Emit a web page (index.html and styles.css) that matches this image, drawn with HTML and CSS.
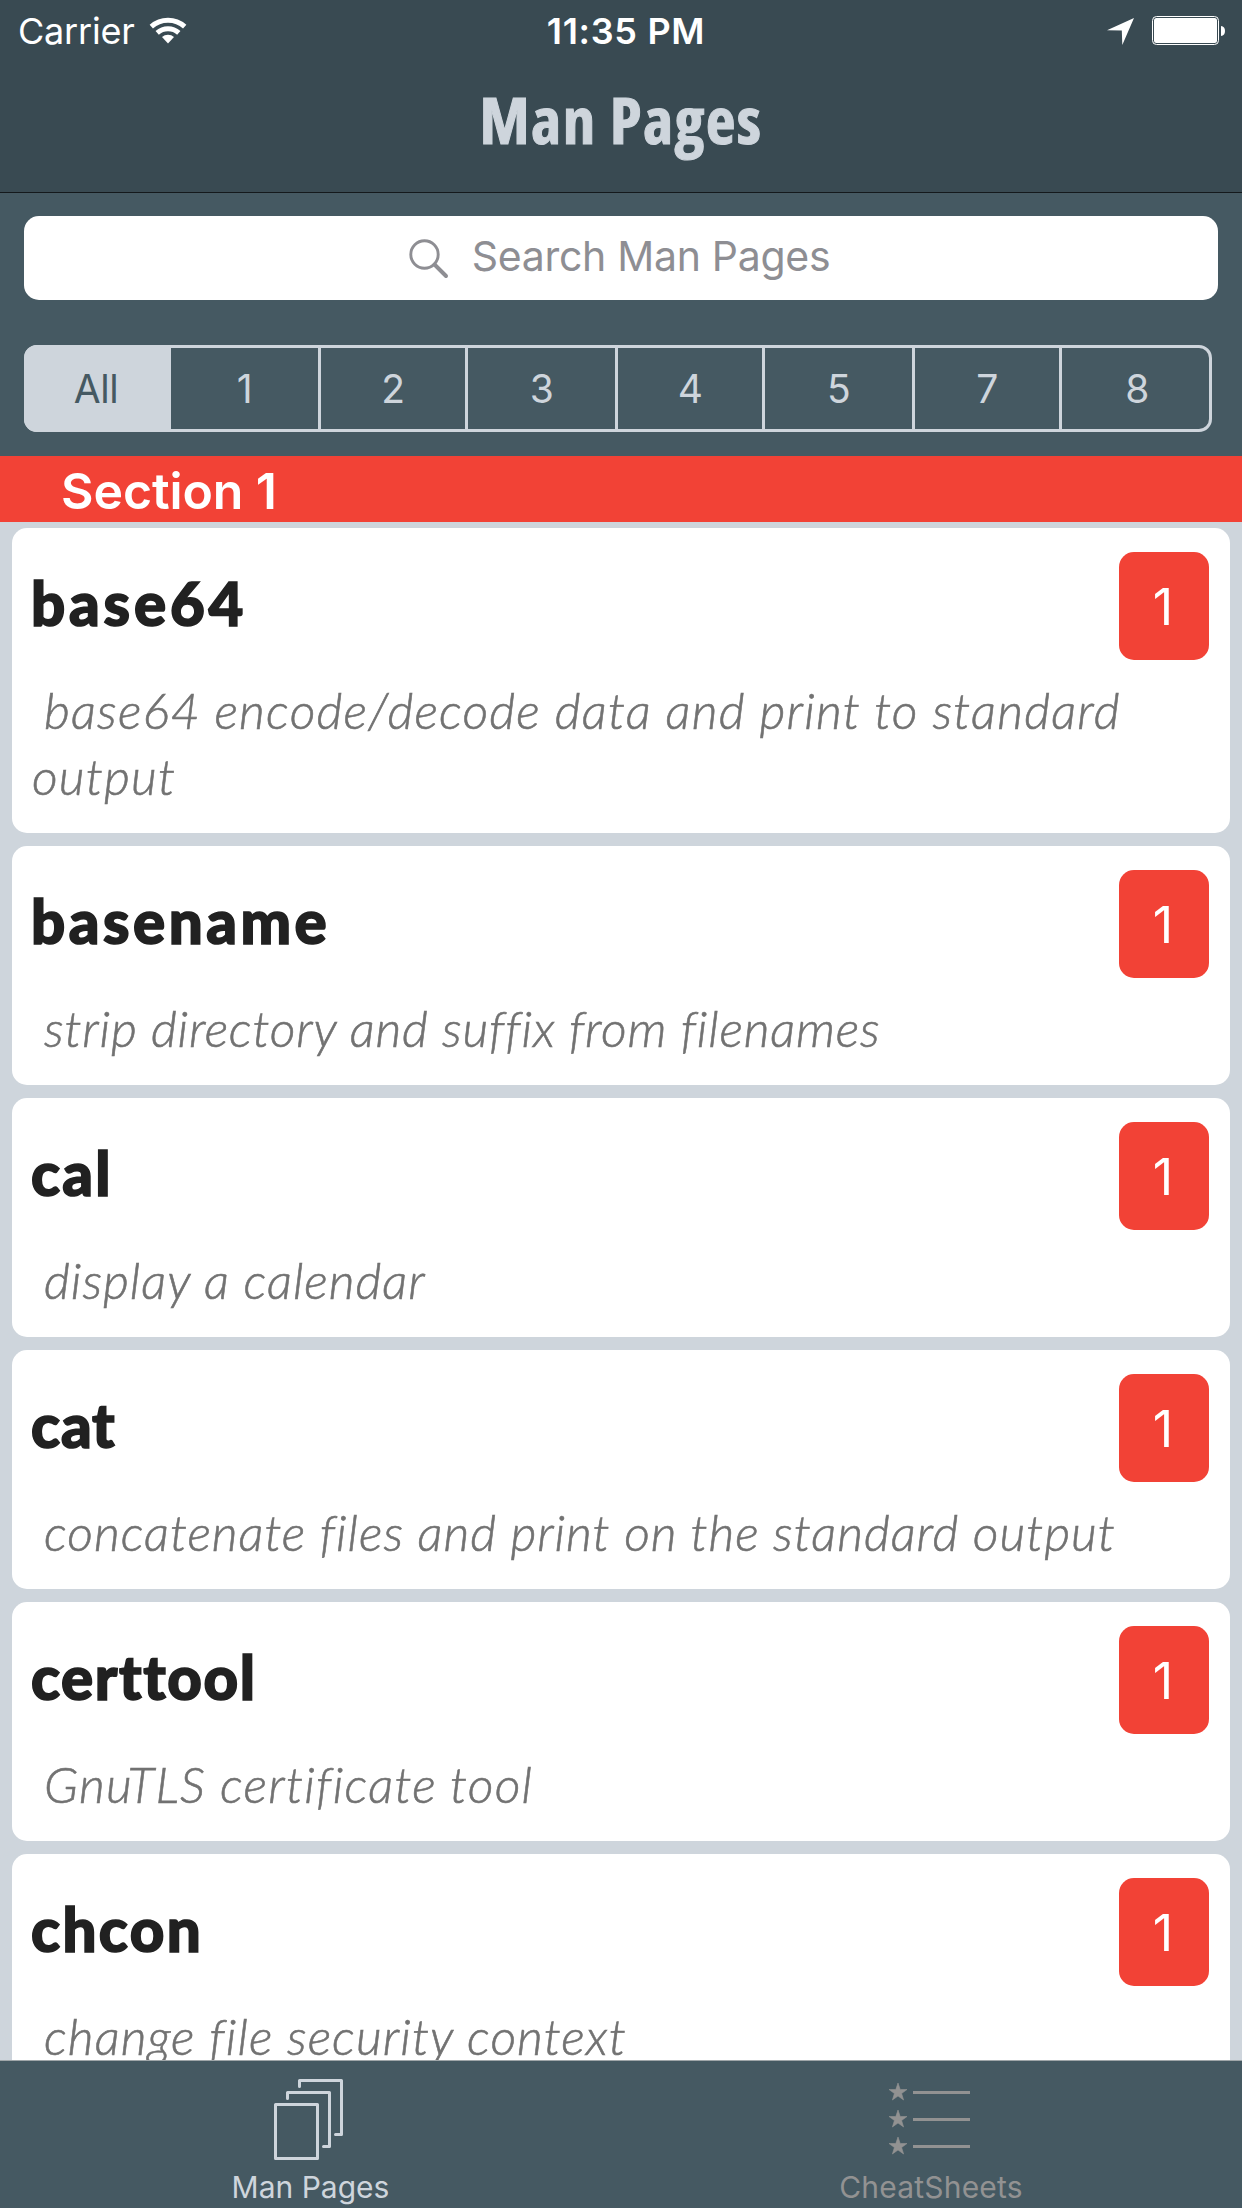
FILE: index.html
```html
<!DOCTYPE html>
<html lang="en">
<head>
<meta charset="utf-8">
<title>Man Pages</title>
<link rel="stylesheet" href="styles.css">
</head>
<body>
<div class="app">
  <header class="nav">
    <div class="status">
      <div class="status-left">
        <span class="carrier">Carrier</span>
        <svg class="wifi" viewBox="0 0 38 28" width="38" height="28">
          <path d="M2.3 10.6A25.2 25.2 0 0 1 35.7 10.6" fill="none" stroke="#fff" stroke-width="5"/>
          <path d="M8.2 16.9A16.4 16.4 0 0 1 29.8 16.9" fill="none" stroke="#fff" stroke-width="5"/>
          <path d="M19 27.4L13 21A9 9 0 0 1 25 21Z" fill="#fff"/>
        </svg>
      </div>
      <span class="time">11:35 PM</span>
      <div class="status-right">
        <svg class="location" viewBox="0 0 27 27" width="27" height="27"><path d="M27 0L0 12.2L14.8 12.6L15.3 27Z" fill="#fff"/></svg>
        <svg class="battery" viewBox="0 0 73 29" width="73" height="29">
          <rect x=".5" y=".5" width="66" height="28" rx="4" fill="none" stroke="#fff"/>
          <rect x="2" y="2" width="63" height="25" rx="2.5" fill="#fff"/>
          <path d="M69 10Q73 10.500 73 15Q73 19.500 69 20Z" fill="#fff"/>
        </svg>
      </div>
    </div>
    <h1 class="nav-title">Man Pages</h1>
  </header>

  <section class="filters">
    <div class="search">
      <svg class="search-icon" viewBox="0 0 40 40" width="40" height="40" fill="none" stroke="#8e8e93">
        <circle cx="15.500" cy="15.500" r="13.700" stroke-width="2.900"/>
        <path d="M25.500 25.500L37 37" stroke-width="4" stroke-linecap="round"/>
      </svg>
      <span class="search-text">Search Man Pages</span>
    </div>
    <div class="segments">
      <span class="segment selected">All</span>
      <span class="segment">1</span>
      <span class="segment">2</span>
      <span class="segment">3</span>
      <span class="segment">4</span>
      <span class="segment">5</span>
      <span class="segment">7</span>
      <span class="segment">8</span>
    </div>
  </section>

  <h2 class="section-title">Section 1</h2>

  <main class="list">
    <article class="card base64">
      <div class="card-head"><h3 class="name">base64</h3><span class="badge">1</span></div>
      <p class="desc">base64 encode/decode data and print to standard output</p>
    </article>
    <article class="card basename">
      <div class="card-head"><h3 class="name">basename</h3><span class="badge">1</span></div>
      <p class="desc">strip directory and suffix from filenames</p>
    </article>
    <article class="card cal">
      <div class="card-head"><h3 class="name">cal</h3><span class="badge">1</span></div>
      <p class="desc">display a calendar</p>
    </article>
    <article class="card cat">
      <div class="card-head"><h3 class="name">cat</h3><span class="badge">1</span></div>
      <p class="desc">concatenate files and print on the standard output</p>
    </article>
    <article class="card certtool">
      <div class="card-head"><h3 class="name">certtool</h3><span class="badge">1</span></div>
      <p class="desc">GnuTLS certificate tool</p>
    </article>
    <article class="card chcon">
      <div class="card-head"><h3 class="name">chcon</h3><span class="badge">1</span></div>
      <p class="desc">change file security context</p>
    </article>
  </main>

  <nav class="tabs">
    <div class="tab active">
      <svg class="tab-icon" viewBox="0 0 101 108" width="101" height="108" fill="none" stroke="currentColor" stroke-width="3" stroke-linejoin="round" stroke-linecap="round">
        <rect x="15.500" y="43.500" width="42" height="54"/>
        <path d="M27.500 37.500V31.500H69.500V85.500H63.500"/>
        <path d="M39.500 25.500V19.500H81.500V73.500H75.500"/>
      </svg>
      <span class="tab-label">Man Pages</span>
    </div>
    <div class="tab">
      <svg class="tab-icon" viewBox="0 0 101 108" width="101" height="108">
        <defs><path id="star" d="M9 0L11.200 6.500H18L12.600 10.500L14.600 17L9 13L3.400 17L5.400 10.500L0 6.500H6.800Z" stroke="currentColor" stroke-width=".6"/></defs>
        <g fill="currentColor">
          <use href="#star" x="8" y="22"/><rect x="32" y="30" width="57" height="3"/>
          <use href="#star" x="8" y="49"/><rect x="32" y="57" width="57" height="3"/>
          <use href="#star" x="8" y="76"/><rect x="32" y="84" width="57" height="3"/>
        </g>
      </svg>
      <span class="tab-label cheat">CheatSheets</span>
    </div>
  </nav>
</div>
</body>
</html>
```
FILE: styles.css
```css
* { box-sizing: border-box; }

body {
  margin: 0;
  font-family: Inter, "Liberation Sans", sans-serif;
}

h1, h2, h3, p { margin: 0; }

svg { display: block; flex: none; }

.app {
  display: flex;
  flex-direction: column;
  width: 1242px;
  height: 2208px;
  overflow: hidden;
  background: #ced5dc;
}

/* Status bar and title */
.nav {
  flex: none;
  height: 193px;
  background: #394a52;
  border-bottom: 1px solid #14191c;
}

.status {
  display: grid;
  grid-template-columns: 1fr auto 1fr;
  height: 62px;
  padding: 0 17px 0 18px;
  line-height: 62px;
  font-size: 36px;
  color: #fff;
}

.status-left { display: flex; }
.carrier { letter-spacing: -0.2px; }
.wifi { margin: 16px 0 0 14px; }

.time {
  font-weight: 600;
  letter-spacing: 0.7px;
  margin-left: 9px;
}

.status-right { display: flex; justify-content: flex-end; }
.location { margin: 18px 18px 0 0; }
.battery { margin-top: 16px; }

.nav-title {
  text-align: center;
  font-family: "Open Sans", sans-serif;
  font-stretch: 75%;
  font-weight: 750;
  font-size: 65px;
  line-height: 114px;
  letter-spacing: 1.4px;
  color: #ced5dc;
  -webkit-text-stroke: 1px #ced5dc;
}

/* Search field and section filter */
.filters {
  flex: none;
  height: 263px;
  padding: 23px 24px 0;
  background: #455962;
}

.search {
  display: flex;
  justify-content: center;
  height: 84px;
  padding-right: 3px;
  border-radius: 15px;
  background: #fff;
  color: #8e8e93;
}

.search-icon { margin: 23px 23px 0 0; }

.search-text {
  font-size: 41px;
  line-height: 80px;
  letter-spacing: -0.3px;
}

.segments {
  display: grid;
  grid-template-columns: 144px 150px 147px 150px 147px 150px 147px 147px;
  width: 1188px;
  height: 87px;
  margin-top: 45px;
  border: 3px solid #ced5dc;
  border-radius: 13px;
}

.segment {
  border-right: 3px solid #ced5dc;
  text-align: center;
  font-size: 39px;
  line-height: 81px;
  letter-spacing: -0.5px;
  color: #ced5dc;
}

.segment:last-child {
  border-right: 0;
  padding-left: 3px;
}

.segment.selected {
  margin: -3px 0 -3px -3px;
  padding-right: 3px;
  border-right: 0;
  border-radius: 13px 0 0 13px;
  background: #ced5dc;
  color: #455962;
  line-height: 87px;
}

.section-title {
  flex: none;
  height: 66px;
  padding: 2px 0 0 61px;
  background: #f24236;
  color: #fff;
  font-weight: 600;
  font-size: 50px;
  line-height: 66px;
  letter-spacing: -0.1px;
}

/* Command cards */
.list {
  flex: 1;
  min-height: 0;
  overflow: hidden;
  display: flex;
  flex-direction: column;
  gap: 13px;
  padding: 6px 12px 0;
}

.card {
  flex: none;
  padding: 24px 21px 24px 19px;
  border-radius: 15px;
  background: #fff;
  font-family: Lato, sans-serif;
}

.card-head {
  display: flex;
  justify-content: space-between;
  height: 108px;
}

.name {
  margin-top: 15px;
  font-size: 60px;
  font-weight: 900;
  line-height: 72px;
  color: #212121;
  -webkit-text-stroke: 1.6px #212121;
}

.badge {
  width: 90px;
  height: 108px;
  padding-right: 2px;
  border-radius: 15px;
  background: #f24236;
  color: #fff;
  text-align: center;
  font-family: Inter, sans-serif;
  font-size: 50px;
  line-height: 111px;
}

.desc {
  margin-top: 17px;
  padding-left: 1px;
  text-indent: 12px;
  font-size: 50px;
  font-style: italic;
  font-weight: 300;
  line-height: 66px;
  color: #727272;
  -webkit-text-stroke: 0.6px #727272;
}

.base64 .name { letter-spacing: 3.8px; }
.base64 .desc { letter-spacing: 1.2px; }
.basename .name { letter-spacing: 3.5px; }
.basename .desc { letter-spacing: 0.8px; }
.cal .name { letter-spacing: 2.2px; }
.cal .desc { letter-spacing: 1px; }
.cat .name { letter-spacing: 0.9px; }
.cat .desc { letter-spacing: 0.95px; }
.certtool .name { letter-spacing: 1.6px; }
.certtool .desc { letter-spacing: 1.25px; }
.chcon .name { letter-spacing: 2.4px; }
.chcon .desc { letter-spacing: 1.07px; }

/* Tab bar */
.tabs {
  flex: none;
  display: grid;
  grid-template-columns: 1fr 1fr;
  height: 148px;
  border-top: 1px solid #a0a6a9;
  background: #455962;
}

.tab {
  display: flex;
  flex-direction: column;
  align-items: center;
  color: #929292;
}

.tab.active { color: #ced5dc; }

.tab-label {
  font-size: 30px;
  line-height: 36px;
}

.tab-label.cheat {
  letter-spacing: 0.2px;
  padding-right: 1px;
}
```
